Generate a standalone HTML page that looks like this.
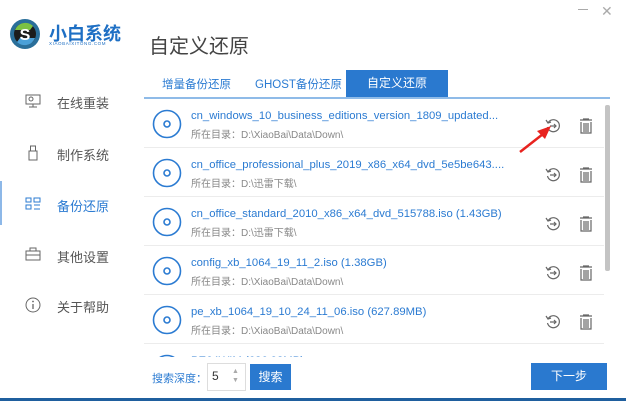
<!DOCTYPE html>
<html><head><meta charset="utf-8"><style>
*{margin:0;padding:0;box-sizing:border-box}
body{width:626px;height:401px;overflow:hidden;background:#fff;font-family:"Liberation Sans","Noto Sans CJK SC",sans-serif;position:relative}
.a{position:absolute}
.nav{position:absolute;left:57px;font-size:13px;color:#555}
.ni{position:absolute;left:25px}
.row{position:absolute;left:0;width:460px;height:49px;border-bottom:1px solid #ececec}
.row .t{position:absolute;left:47px;top:11px;font-size:11.3px;color:#2b7bd2;white-space:nowrap}
.row .p{position:absolute;left:47px;top:27px;font-size:10px;color:#888;white-space:nowrap}
.row svg.d{position:absolute;left:8px;top:10px}
.row .r{position:absolute;left:401px;top:19px}
.row .x{position:absolute;left:434px;top:19px}
</style></head><body>
<svg class="a" style="left:9px;top:18px" width="32" height="32" viewBox="0 0 32 32"><circle cx="16" cy="16" r="15" fill="#2a6f9a"/><circle cx="16" cy="16" r="11" fill="#1c1c1c"/><path d="M6 12 A11 11 0 0 1 24 8 L21 12 Z" fill="#7cc243"/><path d="M26 20 A11 11 0 0 1 8 24 L11 20 Z" fill="#4aa0d8"/><text x="16" y="22" font-size="16" font-weight="bold" fill="#fff" text-anchor="middle" font-family="Liberation Sans">S</text></svg>
<div class="a" style="left:49px;top:20px;font-size:18px;font-weight:bold;color:#1e6fc4">小白系统</div>
<div class="a" style="left:49px;top:41px;font-size:4.5px;color:#1e6fc4;letter-spacing:0.6px">XIAOBAIXITONG.COM</div>
<div class="a" style="left:149px;top:30px;font-size:20px;color:#444">自定义还原</div>
<div class="a" style="left:578px;top:9px;width:10px;height:1px;background:#aaa"></div>
<div class="a" style="left:601px;top:3px;font-size:14px;color:#aaa">✕</div>
<svg class="ni" style="top:94px" width="16" height="14"><rect x="1" y="1" width="14" height="9" fill="none" stroke="#666"/><path d="M8 10v3M4 13h8" stroke="#666"/><circle cx="6" cy="5" r="2" fill="none" stroke="#666"/></svg>
<div class="nav" style="top:93px">在线重装</div>
<svg class="ni" style="top:145px;left:28px" width="10" height="16"><rect x="1" y="6" width="8" height="9" fill="none" stroke="#666"/><rect x="2.5" y="1" width="5" height="5" fill="none" stroke="#666"/></svg>
<div class="nav" style="top:145px">制作系统</div>
<div class="a" style="left:0;top:181px;width:2px;height:44px;background:#8db8e8"></div>
<svg class="ni" style="top:197px" width="16" height="14"><rect x="1" y="1" width="5" height="4" fill="none" stroke="#2b7bd2"/><rect x="9" y="1" width="6" height="4" fill="none" stroke="#2b7bd2"/><rect x="1" y="8" width="5" height="4" fill="none" stroke="#2b7bd2"/><path d="M9 8h6M9 12h6" stroke="#2b7bd2"/></svg>
<div class="nav" style="top:196px;color:#2b7bd2">备份还原</div>
<svg class="ni" style="top:247px" width="16" height="14"><rect x="1" y="4" width="14" height="9" fill="none" stroke="#666"/><path d="M5 4V1h6v3M1 8h14" stroke="#666" fill="none"/></svg>
<div class="nav" style="top:247px">其他设置</div>
<svg class="ni" style="top:297px" width="16" height="16"><circle cx="8" cy="8" r="7" fill="none" stroke="#666"/><path d="M8 7v5" stroke="#666" stroke-width="1.3"/><circle cx="8" cy="4.5" r="0.9" fill="#666"/></svg>
<div class="nav" style="top:297px">关于帮助</div>
<div class="a" style="left:162px;top:76px;font-size:11.5px;color:#2b7bd2">增量备份还原</div>
<div class="a" style="left:255px;top:76px;font-size:11.5px;color:#2b7bd2">GHOST备份还原</div>
<div class="a" style="left:346px;top:70px;width:102px;height:27px;background:#2a79cf;color:#fff;font-size:12px;text-align:center;line-height:27px">自定义还原</div>
<div class="a" style="left:144px;top:97px;width:466px;height:2px;background:#8fbbe8"></div>
<div class="a" style="left:605px;top:105px;width:5px;height:166px;background:#c4c4c4;border-radius:2px"></div>
<div class="a" style="left:144px;top:99px;width:460px;height:258px;overflow:hidden">
<div class="row" style="top:0"><svg class="d" width="30" height="30"><circle cx="15" cy="15" r="13.5" fill="none" stroke="#2b7bd2" stroke-width="1.6"/><circle cx="15" cy="15" r="3" fill="none" stroke="#2b7bd2" stroke-width="1.6"/></svg><div class="t">cn_windows_10_business_editions_version_1809_updated...</div><div class="p">所在目录：D:\XiaoBai\Data\Down\</div>
<svg class="r" width="16" height="16"><path d="M3 5A6 6 0 1 1 2.5 9" fill="none" stroke="#666" stroke-width="1.2"/><path d="M1 2l2 3 3-1" fill="none" stroke="#666" stroke-width="1.2"/><path d="M5 8h6M9 6l2 2-2 2" fill="none" stroke="#666" stroke-width="1.2"/></svg>
<svg class="x" width="16" height="16"><path d="M2 2h12M5 1h6M3 4v11h10V4M6 5v9M8 5v9M10 5v9" fill="none" stroke="#666" stroke-width="1.2"/></svg></div>
<div class="row" style="top:49px"><svg class="d" width="30" height="30"><circle cx="15" cy="15" r="13.5" fill="none" stroke="#2b7bd2" stroke-width="1.6"/><circle cx="15" cy="15" r="3" fill="none" stroke="#2b7bd2" stroke-width="1.6"/></svg><div class="t">cn_office_professional_plus_2019_x86_x64_dvd_5e5be643....</div><div class="p">所在目录：D:\迅雷下载\</div>
<svg class="r" width="16" height="16"><path d="M3 5A6 6 0 1 1 2.5 9" fill="none" stroke="#666" stroke-width="1.2"/><path d="M1 2l2 3 3-1" fill="none" stroke="#666" stroke-width="1.2"/><path d="M5 8h6M9 6l2 2-2 2" fill="none" stroke="#666" stroke-width="1.2"/></svg>
<svg class="x" width="16" height="16"><path d="M2 2h12M5 1h6M3 4v11h10V4M6 5v9M8 5v9M10 5v9" fill="none" stroke="#666" stroke-width="1.2"/></svg></div>
<div class="row" style="top:98px"><svg class="d" width="30" height="30"><circle cx="15" cy="15" r="13.5" fill="none" stroke="#2b7bd2" stroke-width="1.6"/><circle cx="15" cy="15" r="3" fill="none" stroke="#2b7bd2" stroke-width="1.6"/></svg><div class="t">cn_office_standard_2010_x86_x64_dvd_515788.iso (1.43GB)</div><div class="p">所在目录：D:\迅雷下载\</div>
<svg class="r" width="16" height="16"><path d="M3 5A6 6 0 1 1 2.5 9" fill="none" stroke="#666" stroke-width="1.2"/><path d="M1 2l2 3 3-1" fill="none" stroke="#666" stroke-width="1.2"/><path d="M5 8h6M9 6l2 2-2 2" fill="none" stroke="#666" stroke-width="1.2"/></svg>
<svg class="x" width="16" height="16"><path d="M2 2h12M5 1h6M3 4v11h10V4M6 5v9M8 5v9M10 5v9" fill="none" stroke="#666" stroke-width="1.2"/></svg></div>
<div class="row" style="top:147px"><svg class="d" width="30" height="30"><circle cx="15" cy="15" r="13.5" fill="none" stroke="#2b7bd2" stroke-width="1.6"/><circle cx="15" cy="15" r="3" fill="none" stroke="#2b7bd2" stroke-width="1.6"/></svg><div class="t">config_xb_1064_19_11_2.iso (1.38GB)</div><div class="p">所在目录：D:\XiaoBai\Data\Down\</div>
<svg class="r" width="16" height="16"><path d="M3 5A6 6 0 1 1 2.5 9" fill="none" stroke="#666" stroke-width="1.2"/><path d="M1 2l2 3 3-1" fill="none" stroke="#666" stroke-width="1.2"/><path d="M5 8h6M9 6l2 2-2 2" fill="none" stroke="#666" stroke-width="1.2"/></svg>
<svg class="x" width="16" height="16"><path d="M2 2h12M5 1h6M3 4v11h10V4M6 5v9M8 5v9M10 5v9" fill="none" stroke="#666" stroke-width="1.2"/></svg></div>
<div class="row" style="top:196px"><svg class="d" width="30" height="30"><circle cx="15" cy="15" r="13.5" fill="none" stroke="#2b7bd2" stroke-width="1.6"/><circle cx="15" cy="15" r="3" fill="none" stroke="#2b7bd2" stroke-width="1.6"/></svg><div class="t">pe_xb_1064_19_10_24_11_06.iso (627.89MB)</div><div class="p">所在目录：D:\XiaoBai\Data\Down\</div>
<svg class="r" width="16" height="16"><path d="M3 5A6 6 0 1 1 2.5 9" fill="none" stroke="#666" stroke-width="1.2"/><path d="M1 2l2 3 3-1" fill="none" stroke="#666" stroke-width="1.2"/><path d="M5 8h6M9 6l2 2-2 2" fill="none" stroke="#666" stroke-width="1.2"/></svg>
<svg class="x" width="16" height="16"><path d="M2 2h12M5 1h6M3 4v11h10V4M6 5v9M8 5v9M10 5v9" fill="none" stroke="#666" stroke-width="1.2"/></svg></div>
<div class="row" style="top:245px;border:none"><svg class="d" width="30" height="30"><circle cx="15" cy="15" r="13.5" fill="none" stroke="#2b7bd2" stroke-width="1.6"/></svg><div class="t">PE64WIM (626.93MB)</div></div>
</div>
<svg class="a" style="left:515px;top:120px" width="40" height="35"><path d="M5 32L28 14" stroke="#e8231f" stroke-width="2.5"/><path d="M36 6L22 11L30 19Z" fill="#e8231f"/></svg>
<div class="a" style="left:152px;top:370px;font-size:11px;color:#2b7bd2">搜索深度：</div>
<div class="a" style="left:207px;top:363px;width:39px;height:28px;border:1px solid #ddd"></div>
<div class="a" style="left:212px;top:369px;font-size:12px;color:#333">5</div>
<div class="a" style="left:232px;top:367px;font-size:7px;color:#aaa;line-height:9px">▲<br>▼</div>
<div class="a" style="left:250px;top:364px;width:41px;height:26px;background:#2a79cf;color:#fff;font-size:12px;text-align:center;line-height:26px">搜索</div>
<div class="a" style="left:531px;top:363px;width:76px;height:27px;background:#2a79cf;color:#fff;font-size:12px;text-align:center;line-height:27px">下一步</div>
<div class="a" style="left:0;top:398px;width:626px;height:3px;background:#1f5f9e"></div>
</body></html>
